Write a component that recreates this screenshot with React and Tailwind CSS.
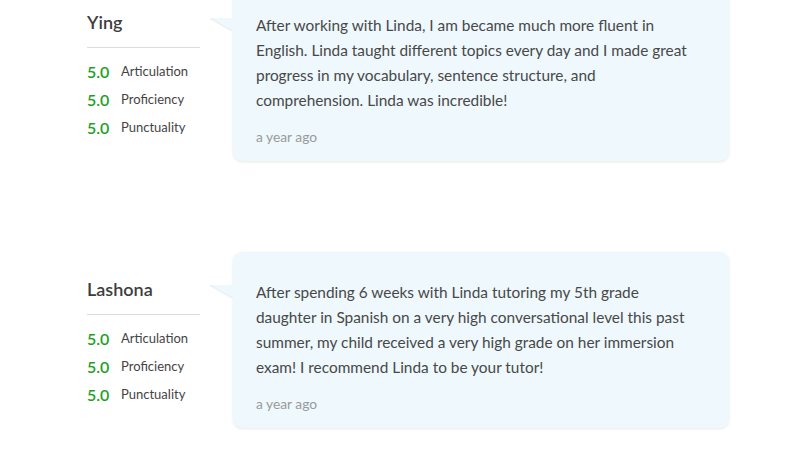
import React from "react";

const reviews = [
  {
    name: "Ying",
    lines: [
      "After working with Linda, I am became much more fluent in",
      "English. Linda taught different topics every day and I made great",
      "progress in my vocabulary, sentence structure, and",
      "comprehension. Linda was incredible!",
    ],
    time: "a year ago",
  },
  {
    name: "Lashona",
    lines: [
      "After spending 6 weeks with Linda tutoring my 5th grade",
      "daughter in Spanish on a very high conversational level this past",
      "summer, my child received a very high grade on her immersion",
      "exam! I recommend Linda to be your tutor!",
    ],
    time: "a year ago",
  },
];

function Review({ r }) {
  return (
    <div className="flex pl-[87px]">
      <div className="w-[113px] shrink-0 pt-[25px]">
        <div className="h-[24px] text-[18px] leading-[24px] font-semibold text-[#3d3d3d]">{r.name}</div>
        <div className="mt-[13px] border-t border-[#dcdcdc]" />
        <div className="mt-[10px] flex flex-col">
          {["Articulation", "Proficiency", "Punctuality"].map((l) => (
            <div key={l} className="flex h-[28px] items-center">
              <span className="w-[34px] text-[16px] font-semibold text-[#1fa024]">5.0</span>
              <span className="text-[13px] text-[#444]">{l}</span>
            </div>
          ))}
        </div>
      </div>
      <div className="relative ml-[33px] w-[496px] rounded-[9px] bg-[#eef8fd] px-[23px] pt-[28px] pb-[14px] shadow-[0_1px_3px_rgba(0,0,0,0.09)]">
        <svg className="absolute left-[-23px] top-[33px]" width="23" height="13" viewBox="0 0 23 13">
          <path d="M0 0 L23 0 L23 13 Z" fill="#eef8fd" />
          <path d="M0 0.5 L23 13.5" stroke="rgba(0,0,0,0.06)" strokeWidth="1.5" fill="none" />
        </svg>
        <p className="text-[15.4px] leading-[25px] text-[#484848]">
          {r.lines.map((line, i) => (
            <span key={i} className="block whitespace-nowrap">{line}</span>
          ))}
        </p>
        <div className="mt-[14px] text-[13.8px] leading-[20px] text-[#9a9a9a]">{r.time}</div>
      </div>
    </div>
  );
}

export default function App() {
  return (
    <div className="h-[455px] w-[812px] overflow-hidden bg-white" style={{ fontFamily: 'Lato, "Liberation Sans", sans-serif' }}>
      <div className="-mt-[15px] flex flex-col gap-[91px]">
        {reviews.map((r) => (
          <Review key={r.name} r={r} />
        ))}
      </div>
    </div>
  );
}
